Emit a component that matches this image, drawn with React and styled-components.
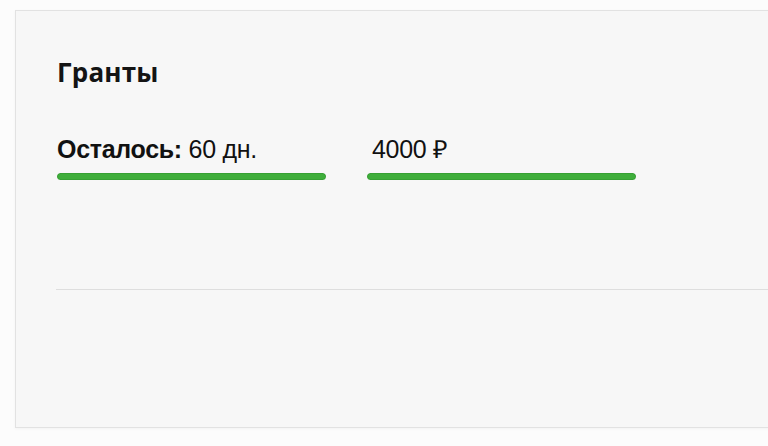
import React from "react";
import styled, { createGlobalStyle } from "styled-components";

const Global = createGlobalStyle`
  html, body {
    margin: 0;
    padding: 0;
    background: #fcfcfc;
    overflow: hidden;
  }
  body {
    font-family: "Liberation Sans", Arial, sans-serif;
    color: #111;
  }
`;

const Page = styled.div`
  width: 768px;
  height: 446px;
  padding: 10px 0 0 15px;
  box-sizing: border-box;
  overflow: hidden;
`;

const Card = styled.section`
  width: 800px;
  height: 418px;
  box-sizing: border-box;
  background: #f7f7f7;
  border: 1px solid #e2e2e2;
  box-shadow: 0 1px 3px rgba(0, 0, 0, 0.04);
  padding: 47px 0 0 41px;
  display: flex;
  flex-direction: column;
`;

const Title = styled.h2`
  margin: 0;
  font-family: "Open Sans", "Liberation Sans", sans-serif;
  font-size: 26px;
  line-height: 28px;
  font-weight: 700;
  letter-spacing: 0.2px;
  color: #141414;
`;

const Stats = styled.div`
  margin-top: 49px;
  display: grid;
  grid-template-columns: 269px 269px;
  column-gap: 41px;
`;

const Stat = styled.div`
  display: flex;
  flex-direction: column;
  gap: 10px;
`;

const StatText = styled.div`
  font-size: 25px;
  line-height: 28px;
  letter-spacing: -0.3px;
  color: #111;
  padding-left: ${(p) => p.$indent || 0}px;
  white-space: nowrap;
`;

const Label = styled.b`
  font-weight: 700;
`;

const Track = styled.div`
  height: 7px;
  border-radius: 4px;
  background: #e4e4e4;
  overflow: hidden;
`;

const Fill = styled.div`
  height: 100%;
  border-radius: 4px;
  background: #3fae3b;
  box-shadow: inset 0 0 0 1px rgba(30, 120, 30, 0.25);
`;

const Divider = styled.hr`
  margin: 109px 0 0 -1px;
  border: 0;
  border-top: 1px solid #dedede;
`;

export default function App() {
  const stats = [
    { key: "days", label: "Осталось:", value: "60 дн.", progress: 100 },
    { key: "sum", value: "4000 ₽", progress: 100, indent: 5 },
  ];
  return (
    <>
      <Global />
      <Page>
        <Card>
          <Title>Гранты</Title>
          <Stats>
            {stats.map((s) => (
              <Stat key={s.key}>
                <StatText $indent={s.indent}>
                  {s.label && <Label>{s.label} </Label>}
                  {s.value}
                </StatText>
                <Track>
                  <Fill style={{ width: `${s.progress}%` }} />
                </Track>
              </Stat>
            ))}
          </Stats>
          <Divider />
        </Card>
      </Page>
    </>
  );
}
